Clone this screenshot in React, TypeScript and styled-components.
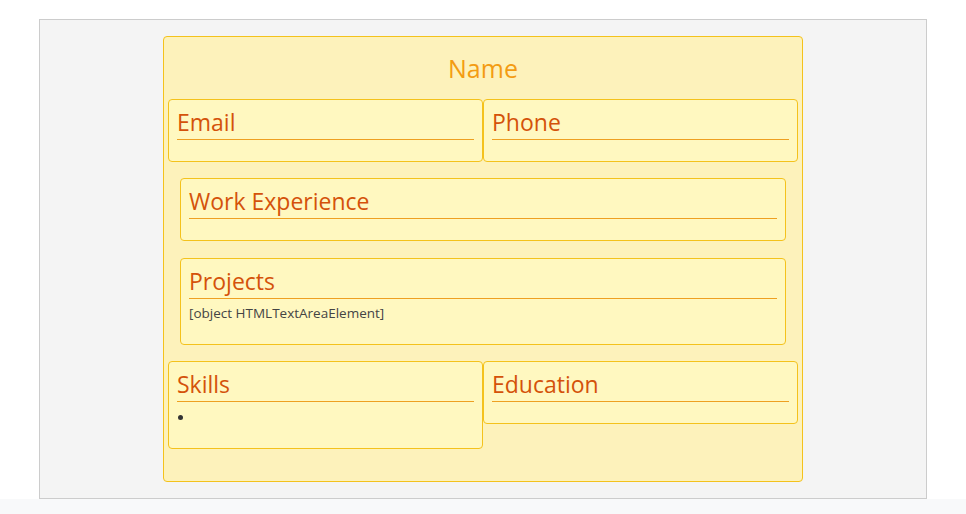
import React from "react";
import styled, { createGlobalStyle } from "styled-components";

const Global = createGlobalStyle`
  html, body { margin: 0; padding: 0; background: #ffffff; }
  body { font-family: "Comic Sans MS", "Open Sans", sans-serif; }
  * { box-sizing: border-box; }
`;

const Frame = styled.div`
  margin: 19px 39px 0;
  width: 888px;
  height: 480px;
  border: 1px solid #cccccc;
  background: #f4f4f4;
  padding: 16px 0;
`;

const Footer = styled.div`
  height: 15px;
  background: #f8f9fa;
`;

const Resume = styled.div`
  width: 640px;
  height: 446px;
  margin: 0 auto;
  background: #fdf2bb;
  border: 1px solid #f4c21c;
  border-radius: 4px;
  padding: 4px;
`;

const Title = styled.h1`
  margin: 0;
  height: 58px;
  padding-bottom: 4px;
  font-family: "Comic Sans MS", "Open Sans", sans-serif;
  font-weight: 400;
  font-size: 25px;
  line-height: 54px;
  text-align: center;
  color: #f39c12;
`;

const Row = styled.div`
  display: flex;
  align-items: flex-start;
`;

const Section = styled.section<{ $inset?: boolean; $top?: number }>`
  flex: ${(p) => (p.$inset ? "none" : "1 1 0")};
  margin: ${(p) => (p.$inset ? `${p.$top ?? 16}px 12px 16px` : "0")};
  background: #fff8c0;
  border: 1px solid #f4c21c;
  border-radius: 4px;
  padding: 8px;
`;

const Heading = styled.h2`
  margin: 0;
  height: 32px;
  font-family: "Comic Sans MS", "Open Sans", sans-serif;
  font-weight: 400;
  font-size: 23px;
  line-height: 28px;
  color: #d4520a;
  border-bottom: 1px solid #eea021;
`;

const Body = styled.div<{ $h: number }>`
  min-height: ${(p) => p.$h}px;
`;

const Para = styled.p`
  margin: 0;
  padding-top: 6px;
  font-family: "Comic Sans MS", "Open Sans", sans-serif;
  font-size: 13.5px;
  line-height: 17px;
  color: #444444;
`;

const List = styled.ul`
  margin: 0;
  padding: 7px 0 0;
  list-style: none;
`;

const Item = styled.li`
  height: 17px;
  display: flex;
  align-items: center;
  &::before {
    content: "";
    display: block;
    width: 5px;
    height: 5px;
    margin-left: 1px;
    border-radius: 50%;
    background: #333333;
  }
`;

export default function App() {
  return (
    <>
      <Global />
      <Frame>
        <Resume>
          <Title>Name</Title>
          <Row>
            <Section>
              <Heading>Email</Heading>
              <Body $h={13} />
            </Section>
            <Section>
              <Heading>Phone</Heading>
              <Body $h={13} />
            </Section>
          </Row>
          <Section $inset>
            <Heading>Work Experience</Heading>
            <Body $h={13} />
          </Section>
          <Section $inset $top={17}>
            <Heading>Projects</Heading>
            <Body $h={37}>
              <Para>[object HTMLTextAreaElement]</Para>
            </Body>
          </Section>
          <Row>
            <Section>
              <Heading>Skills</Heading>
              <Body $h={38}>
                <List>
                  <Item />
                </List>
              </Body>
            </Section>
            <Section>
              <Heading>Education</Heading>
              <Body $h={13} />
            </Section>
          </Row>
        </Resume>
      </Frame>
      <Footer />
    </>
  );
}
